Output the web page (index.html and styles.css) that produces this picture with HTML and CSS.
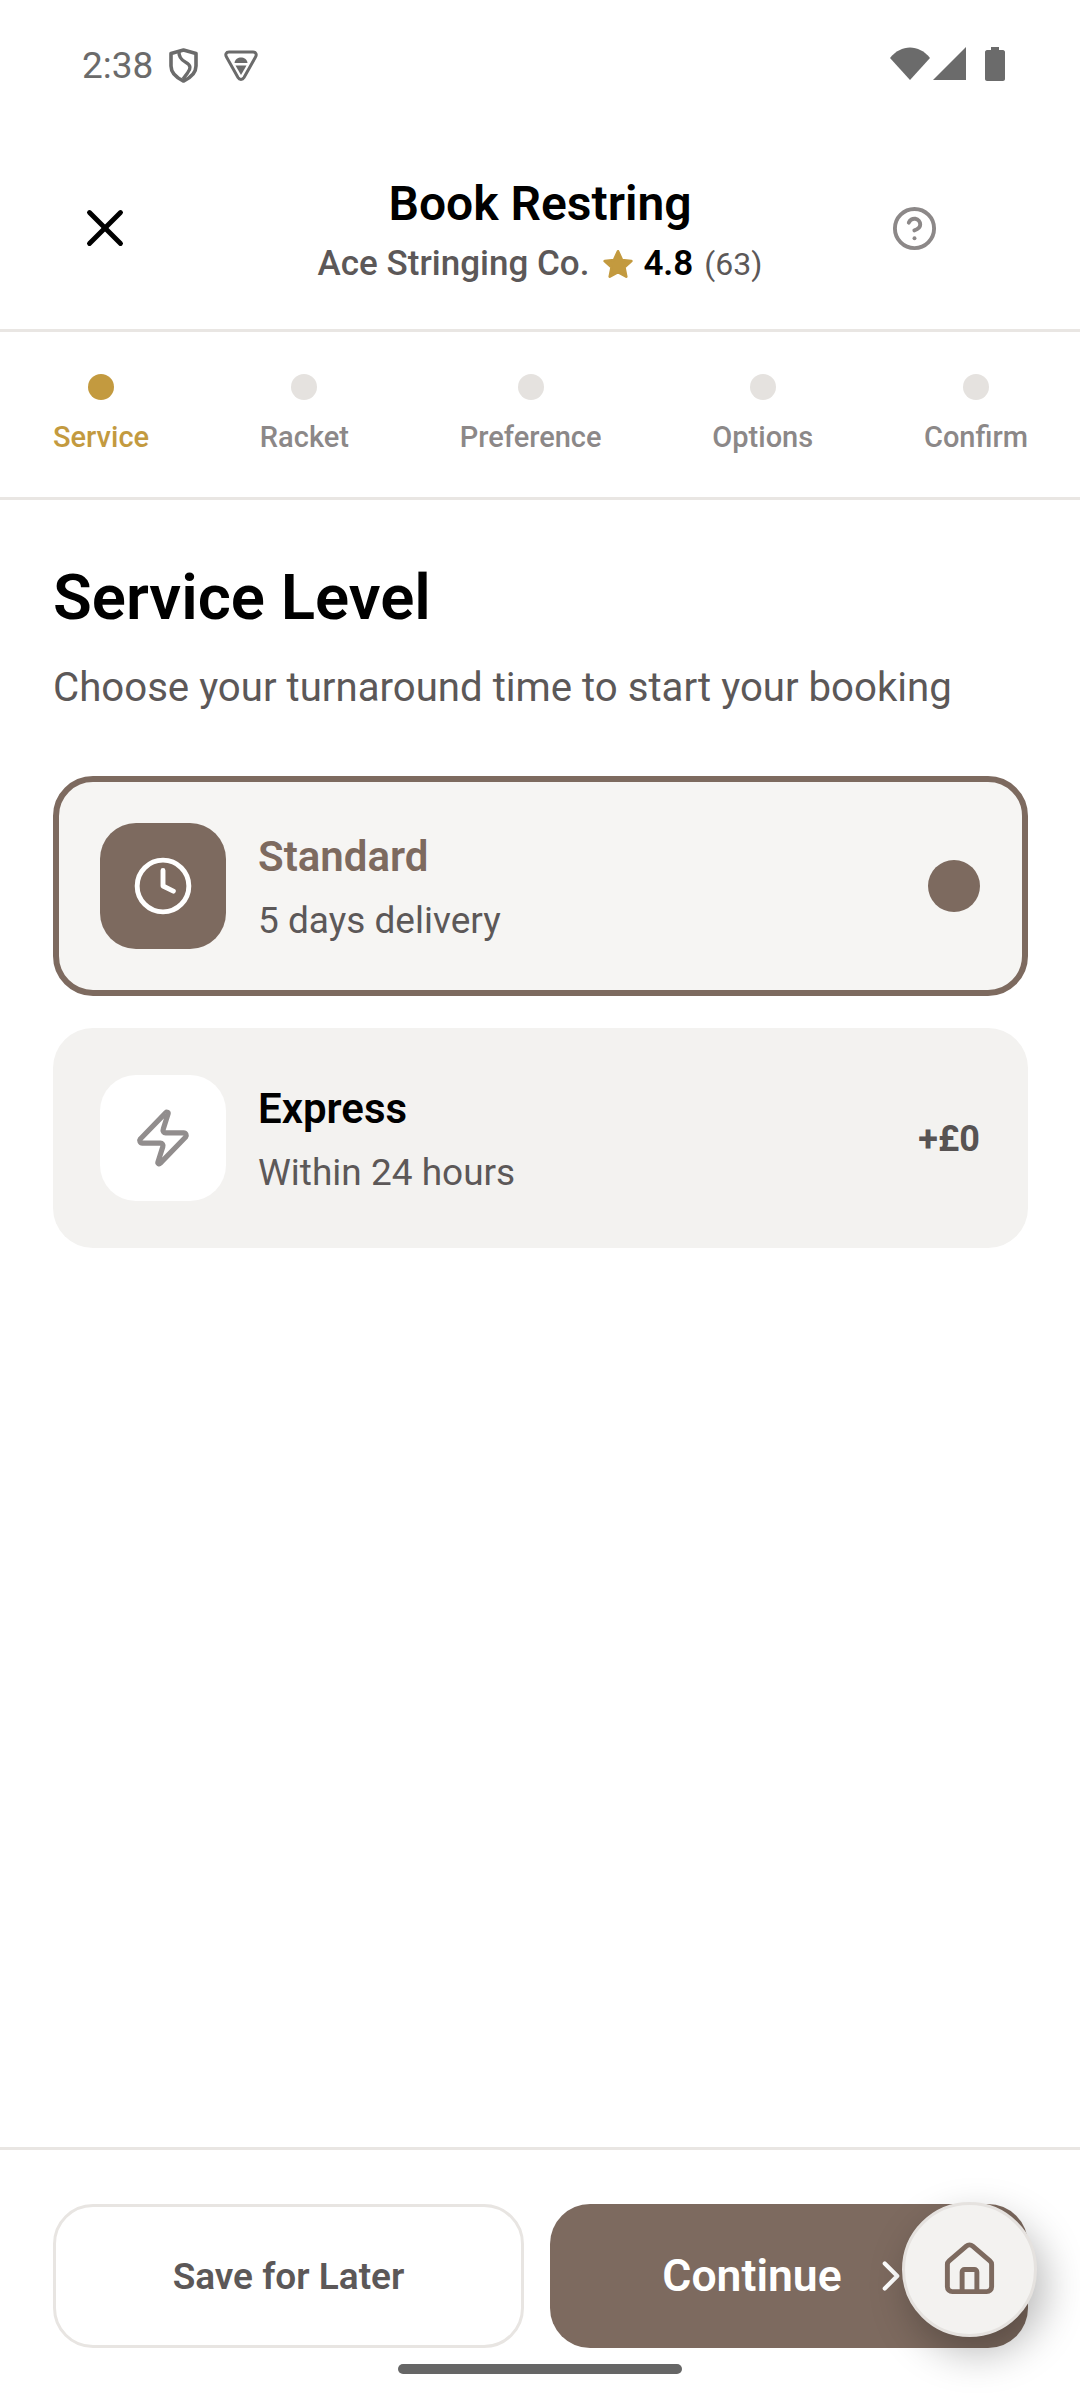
FILE: index.html
```html
<!DOCTYPE html>
<html lang="en">
<head>
    <meta charset="UTF-8">
    <meta name="viewport" content="width=device-width, initial-scale=1.0">
    <title>Book Restring</title>
    <link rel="stylesheet" href="styles.css">
</head>
<body>

<div class="screen">
    <div class="status-bar">
        <div class="status-left">
            <span class="time">2:38</span>
            <svg class="shield" width="29" height="35" viewBox="0 0 29 35" fill="none" stroke="#6b6b6b" stroke-width="3.600" stroke-linejoin="round">
                <path d="M14.500 2 L27 5.500 V18 C27 25 21 30 14.500 33 C8 30 2 25 2 18 V5.500 Z"/>
                <path d="M10 3 C9.500 9 12 12 17 14.500 C22 17 22 21 18.500 25 L14 31" stroke-width="3.400"/>
            </svg>
            <svg class="android" width="34" height="31" viewBox="0 0 34 31">
                <path d="M5 2 H29 C32 2 33 4.500 31.500 7 L20 27.500 C18.500 30 15.500 30 14 27.500 L2.500 7 C1 4.500 2 2 5 2 Z" fill="none" stroke="#6b6b6b" stroke-width="3"/>
                <path d="M10.500 13 C11 9 14 7.500 17 7.500 C20 7.500 23 9 23.500 13 Z" fill="#6b6b6b"/>
                <path d="M11.500 15.500 H22.500 L17 25 Z" fill="#6b6b6b"/>
            </svg>
        </div>
        <div class="status-right">
            <svg width="40" height="33" viewBox="0 0 40 33"><path d="M0 11 C11 -3 29 -3 40 11 L20 33 Z" fill="#6b6b6b"/></svg>
            <svg width="33" height="33" viewBox="0 0 33 33"><path d="M33 0 V33 H0 Z" fill="#6b6b6b"/></svg>
            <svg class="battery" width="20" height="34" viewBox="0 0 20 34"><path d="M6 0 H14 V3 H18 C19 3 20 4 20 5 V32 C20 33 19 34 18 34 H2 C1 34 0 33 0 32 V5 C0 4 1 3 2 3 H6 Z" fill="#6b6b6b"/></svg>
        </div>
    </div>

    <header class="top-bar">
        <svg class="close-icon" width="62" height="62" viewBox="0 0 24 24" fill="none" stroke="#000" stroke-width="1.900" stroke-linecap="round" stroke-linejoin="round">
            <path d="M18 6 6 18"/>
            <path d="m6 6 12 12"/>
        </svg>
        <div class="top-title">
            <h1>Book Restring</h1>
            <div class="shop-line">
                <span class="shop-name">Ace Stringing Co.</span>
                <svg class="star" width="32" height="32" viewBox="0 0 24 24" fill="#c39a3f" stroke="#c39a3f" stroke-width="2" stroke-linejoin="round">
                    <path d="M12 2.500 15 9 22 9.800 16.800 14.500 18.200 21.500 12 18 5.800 21.500 7.200 14.500 2 9.800 9 9Z"/>
                </svg>
                <span class="rating">4.8</span>
                <span class="count">(63)</span>
            </div>
        </div>
        <svg class="help-icon" width="47" height="47" viewBox="0 0 24 24" fill="none" stroke="#8c8888" stroke-width="2" stroke-linecap="round" stroke-linejoin="round">
            <circle cx="12" cy="12" r="10"/>
            <path d="M9.090 9a3 3 0 0 1 5.830 1c0 2-3 3-3 3"/>
            <path d="M12 17h.01"/>
        </svg>
    </header>

    <nav class="steps">
        <div class="step active"><span class="dot"></span><span>Service</span></div>
        <div class="step"><span class="dot"></span><span>Racket</span></div>
        <div class="step"><span class="dot"></span><span>Preference</span></div>
        <div class="step"><span class="dot"></span><span>Options</span></div>
        <div class="step"><span class="dot"></span><span>Confirm</span></div>
    </nav>

    <main class="content">
        <h2>Service Level</h2>
        <p class="intro">Choose your turnaround time to start your booking</p>

        <div class="option selected">
            <div class="option-icon">
                <svg width="62" height="62" viewBox="0 0 24 24" fill="none" stroke="#fff" stroke-width="1.900" stroke-linecap="round" stroke-linejoin="round">
                    <circle cx="12" cy="12" r="10"/>
                    <path d="M12 6v6l4 2"/>
                </svg>
            </div>
            <div class="option-text">
                <div class="option-name">Standard</div>
                <div class="option-desc">5 days delivery</div>
            </div>
            <span class="radio"></span>
        </div>

        <div class="option">
            <div class="option-icon">
                <svg width="62" height="62" viewBox="0 0 24 24" fill="none" stroke="#918d8d" stroke-width="2" stroke-linecap="round" stroke-linejoin="round">
                    <path d="M4 14a1 1 0 0 1-.78-1.630l9.900-10.200a.5.5 0 0 1 .86.46l-1.920 6.020A1 1 0 0 0 13 10h7a1 1 0 0 1 .78 1.630l-9.900 10.200a.5.5 0 0 1-.86-.46l1.920-6.020A1 1 0 0 0 11 14z"/>
                </svg>
            </div>
            <div class="option-text">
                <div class="option-name">Express</div>
                <div class="option-desc">Within 24 hours</div>
            </div>
            <span class="price">+£0</span>
        </div>
    </main>

    <footer class="actions">
        <button class="btn-save">Save for Later</button>
        <button class="btn-continue">
            <span>Continue</span>
            <svg width="50" height="50" viewBox="0 0 24 24" fill="none" stroke="#fff" stroke-width="2" stroke-linecap="round" stroke-linejoin="round">
                <path d="m9 18 6-6-6-6"/>
            </svg>
        </button>
    </footer>

    <button class="home-fab">
        <svg width="59" height="59" viewBox="0 0 24 24" fill="none" stroke="#7d6a5f" stroke-width="2" stroke-linecap="round" stroke-linejoin="round">
            <path d="M15 21v-8a1 1 0 0 0-1-1h-4a1 1 0 0 0-1 1v8"/>
            <path d="M3 10a2 2 0 0 1 .709-1.528l7-5.999a2 2 0 0 1 2.582 0l7 5.999A2 2 0 0 1 21 10v9a2 2 0 0 1-2 2H5a2 2 0 0 1-2-2z"/>
        </svg>
    </button>
    <div class="home-indicator"></div>
</div>

</body>
</html>
```

FILE: styles.css
```css
* {
    box-sizing: border-box;
}
body {
    margin: 0;
    background-color: #fff;
    font-family: Roboto, sans-serif;
}
.screen {
    position: relative;
    width: 1080px;
    height: 2400px;
    display: flex;
    flex-direction: column;
    overflow: hidden;
}

/* status bar */
.status-bar {
    height: 130px;
    padding: 0 75px 0 82px;
    display: flex;
    align-items: center;
    justify-content: space-between;
}
.status-left {
    display: flex;
    align-items: center;
}
.time {
    font-size: 37px;
    font-weight: 400;
    color: #6b6b6b;
    width: 87px;
}
.android {
    margin-left: 26px;
}
.status-right {
    display: flex;
    align-items: center;
    gap: 3px;
    margin-bottom: 3px;
}
.battery {
    margin-left: 16px;
}

/* header */
.top-bar {
    height: 202px;
    padding: 0 74px;
    border-bottom: 3px solid #e9e6e3;
    display: grid;
    grid-template-columns: 1fr auto 1fr;
    align-items: center;
}
.close-icon,
.help-icon {
    margin-bottom: 3px;
}
.help-icon {
    justify-self: end;
    margin-right: 68px;
}
.top-title {
    text-align: center;
}
h1 {
    margin: 0 0 8px;
    font-size: 48px;
    line-height: 60px;
    font-weight: 600;
    color: #000;
}
.shop-line {
    display: flex;
    align-items: center;
    justify-content: center;
    font-size: 35px;
    line-height: 44px;
    color: #5c5858;
}
.shop-name {
    font-weight: 500;
}
.star {
    margin-left: 13px;
}
.rating {
    margin-left: 9px;
    font-weight: 600;
    color: #000;
}
.count {
    margin-left: 11px;
    font-size: 32px;
}

/* steps */
.steps {
    height: 168px;
    padding: 42px 52px 0 53px;
    border-bottom: 3px solid #e9e6e3;
    display: flex;
    justify-content: space-between;
}
.step {
    display: flex;
    flex-direction: column;
    align-items: center;
    gap: 20px;
    font-size: 29px;
    line-height: 34px;
    font-weight: 500;
    color: #8c8888;
}
.dot {
    width: 26px;
    height: 26px;
    border-radius: 50%;
    background-color: #e5e2df;
}
.step.active {
    color: #c39a3f;
}
.step.active .dot {
    background-color: #c39a3f;
}

/* service options */
.content {
    flex: 1;
    padding: 62px 52px 0 53px;
}
h2 {
    margin: 0;
    font-size: 63.500px;
    line-height: 72px;
    font-weight: 600;
    color: #000;
}
.intro {
    margin: 29px 0 63px;
    font-size: 40.200px;
    line-height: 50px;
    color: #5c5858;
}
.option {
    height: 220px;
    margin-bottom: 32px;
    padding: 0 48px 0 47px;
    border-radius: 40px;
    background-color: #f3f2f0;
    display: flex;
    align-items: center;
    gap: 32px;
}
.option.selected {
    padding: 0 42px 0 41px;
    border: 6px solid #7d6a5f;
    background-color: #f6f5f3;
}
.option-icon {
    width: 126px;
    height: 126px;
    border-radius: 36px;
    background-color: #fff;
    display: flex;
    align-items: center;
    justify-content: center;
}
.selected .option-icon {
    background-color: #7d6a5f;
}
.option-text {
    flex: 1;
    padding-top: 3px;
}
.option-name {
    margin-bottom: 18px;
    font-size: 42px;
    line-height: 48px;
    font-weight: 600;
    color: #000;
}
.selected .option-name {
    color: #7d6a5f;
}
.option-desc {
    font-size: 37px;
    line-height: 44px;
    color: #5c5858;
}
.radio {
    width: 52px;
    height: 52px;
    border-radius: 50%;
    background-color: #7d6a5f;
}
.price {
    padding-top: 2px;
    font-size: 36px;
    font-weight: 700;
    color: #575353;
}

/* footer */
.actions {
    height: 253px;
    padding: 54px 52px 0 53px;
    border-top: 3px solid #e9e6e3;
    display: flex;
    gap: 26px;
    align-items: flex-start;
}
.actions button {
    height: 144px;
    border-radius: 40px;
    font-family: Roboto, sans-serif;
}
.btn-save {
    width: 471px;
    border: 3px solid #e8e5e2;
    background-color: #fff;
    font-size: 37px;
    font-weight: 600;
    color: #5c5858;
}
.btn-continue {
    width: 478px;
    border: none;
    background-color: #7d6a5f;
    font-size: 44.500px;
    font-weight: 600;
    color: #fff;
    display: flex;
    align-items: center;
    justify-content: center;
    gap: 24px;
}

/* things lying over the footer */
.home-fab {
    position: absolute;
    left: 902px;
    top: 2202px;
    width: 135px;
    height: 135px;
    padding: 0;
    border: 3px solid #e5e2df;
    border-radius: 50%;
    background-color: #f3f2f0;
    box-shadow: 8px 16px 40px rgba(0, 0, 0, 0.28);
    display: flex;
    align-items: center;
    justify-content: center;
}
.home-indicator {
    position: absolute;
    left: 398px;
    top: 2364px;
    width: 284px;
    height: 10px;
    border-radius: 5px;
    background-color: #666;
}
```
